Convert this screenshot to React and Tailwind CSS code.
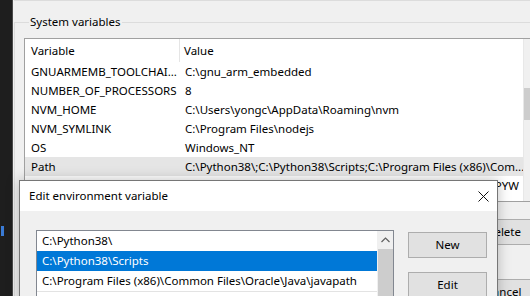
const systemVars = [
    ['GNUARMEMB_TOOLCHAI...', 'C:\\gnu_arm_embedded'],
    ['NUMBER_OF_PROCESSORS', '8'],
    ['NVM_HOME', 'C:\\Users\\yongc\\AppData\\Roaming\\nvm'],
    ['NVM_SYMLINK', 'C:\\Program Files\\nodejs'],
    ['OS', 'Windows_NT'],
    ['Path', 'C:\\Python38\\;C:\\Python38\\Scripts;C:\\Program Files (x86)\\Com...'],
    ['PATHEXT', '.COM;.EXE;.BAT;.CMD;.VBS;.VBE;.JS;.JSE;.WSF;.WSH;.MSC;.PY;.PYW'],
];

const pathEntries = [
    'C:\\Python38\\',
    'C:\\Python38\\Scripts',
    'C:\\Program Files (x86)\\Common Files\\Oracle\\Java\\javapath',
    'C:\\Windows\\system32',
];

function WinButton({ children, className = '' }) {
    return (
        <div className={`flex items-center justify-center h-[26px] border border-[#adadad] bg-[#e1e1e1] ${className}`}>
            {children}
        </div>
    );
}

function EditDialog() {
    return (
        <div className="absolute left-[19px] top-[180px] w-[479px] h-[130px] border border-[#767676] bg-[#f0f0f0] shadow-[0_0_12px_rgba(0,0,0,0.25)]">
            <div className="h-[30px] bg-white flex items-center justify-between pl-[9px] pr-[8px]">
                <span>Edit environment variable</span>
                <svg width="11" height="11" viewBox="0 0 11 11">
                    <path d="M0.5 0.5 L10.5 10.5 M10.5 0.5 L0.5 10.5" stroke="#111" strokeWidth="1" />
                </svg>
            </div>
            <div className="flex pl-[16px] pt-[19px]">
                <div className="w-[358px] h-[90px] border border-[#828790] bg-white flex">
                    <div className="flex-1 min-w-0">
                        {pathEntries.map((p, i) => (
                            <div
                                key={p}
                                className={`h-[20px] flex items-center pl-[5px] whitespace-nowrap ${i === 1 ? 'bg-[#0078d7] text-white' : ''} ${i === 3 ? 'border-t border-[#e3e3e3]' : ''}`}
                            >
                                {p}
                            </div>
                        ))}
                    </div>
                    <div className="w-[16px] bg-[#f0f0f0] flex flex-col items-center">
                        <div className="h-[18px] flex items-center justify-center">
                            <svg width="9" height="6" viewBox="0 0 9 6">
                                <path d="M0.5 5 L4.5 1 L8.5 5" stroke="#606060" strokeWidth="1.2" fill="none" />
                            </svg>
                        </div>
                        <div className="w-[15px] flex-1 bg-[#cdcdcd]" />
                    </div>
                </div>
                <div className="ml-[14px] mt-[2px] flex flex-col gap-[14px]">
                    <WinButton className="w-[79px]">New</WinButton>
                    <WinButton className="w-[79px]">Edit</WinButton>
                </div>
            </div>
        </div>
    );
}

export default function App() {
    return (
        <div className="relative w-[530px] h-[296px] overflow-hidden bg-[#f0f0f0] text-[11.5px] leading-[16px] text-black font-['Segoe_UI','Noto_Sans',sans-serif]">
            <div className="flex h-full">
                <div className="w-[13px] shrink-0 bg-[#1e1e1e] border-r border-[#4a4a4a] flex flex-col">
                    <div className="mt-[226px] ml-[1px] w-[3px] h-[10px] bg-[#3a7bd5]" />
                </div>
                <div className="flex-1 min-w-0 flex flex-col">
                    <div className="ml-[1px] h-[4px] border-l border-b border-[#dcdcdc]" />
                    <fieldset className="ml-[1px] mt-[13px] border-l border-t border-[#dcdcdc] pl-[9px]">
                        <legend className="ml-[5px] px-[1px]">System variables</legend>
                        <div className="mt-[8px] w-[530px] h-[164px] border border-[#a0a0a0] bg-white flex">
                            <div className="w-[498px] shrink-0">
                                <div className="h-[23px] flex items-center">
                                    <div className="w-[155px] h-full flex items-center pl-[6px] border-r border-[#e5e5e5]">Variable</div>
                                    <div className="pl-[4px]">Value</div>
                                </div>
                                {systemVars.map(([name, value]) => (
                                    <div
                                        key={name}
                                        className={`h-[19px] flex items-center whitespace-nowrap ${name === 'Path' ? 'bg-[#e5e5e5]' : ''}`}
                                    >
                                        <div className="w-[156px] pl-[6px] shrink-0 overflow-hidden">{name}</div>
                                        <div
                                            className={`flex-1 min-w-0 overflow-hidden flex pl-[4px] pr-[4px] ${name === 'PATHEXT' ? 'justify-end' : 'justify-start'}`}
                                        >
                                            <span className="shrink-0">{value}</span>
                                        </div>
                                    </div>
                                ))}
                            </div>
                            <div className="w-[17px] bg-[#f0f0f0] border-l border-[#e8e8e8] flex flex-col">
                                <div className="h-[49px]" />
                                <div className="h-[32px] bg-[#cdcdcd]" />
                            </div>
                        </div>
                        <div className="flex justify-end w-[530px] mt-[17px]">
                            <div className="flex flex-col gap-[34px] mr-[13px]">
                                <WinButton className="w-[75px]">Delete</WinButton>
                                <WinButton className="w-[75px]">Cancel</WinButton>
                            </div>
                        </div>
                    </fieldset>
                </div>
            </div>
            <EditDialog />
        </div>
    );
}
